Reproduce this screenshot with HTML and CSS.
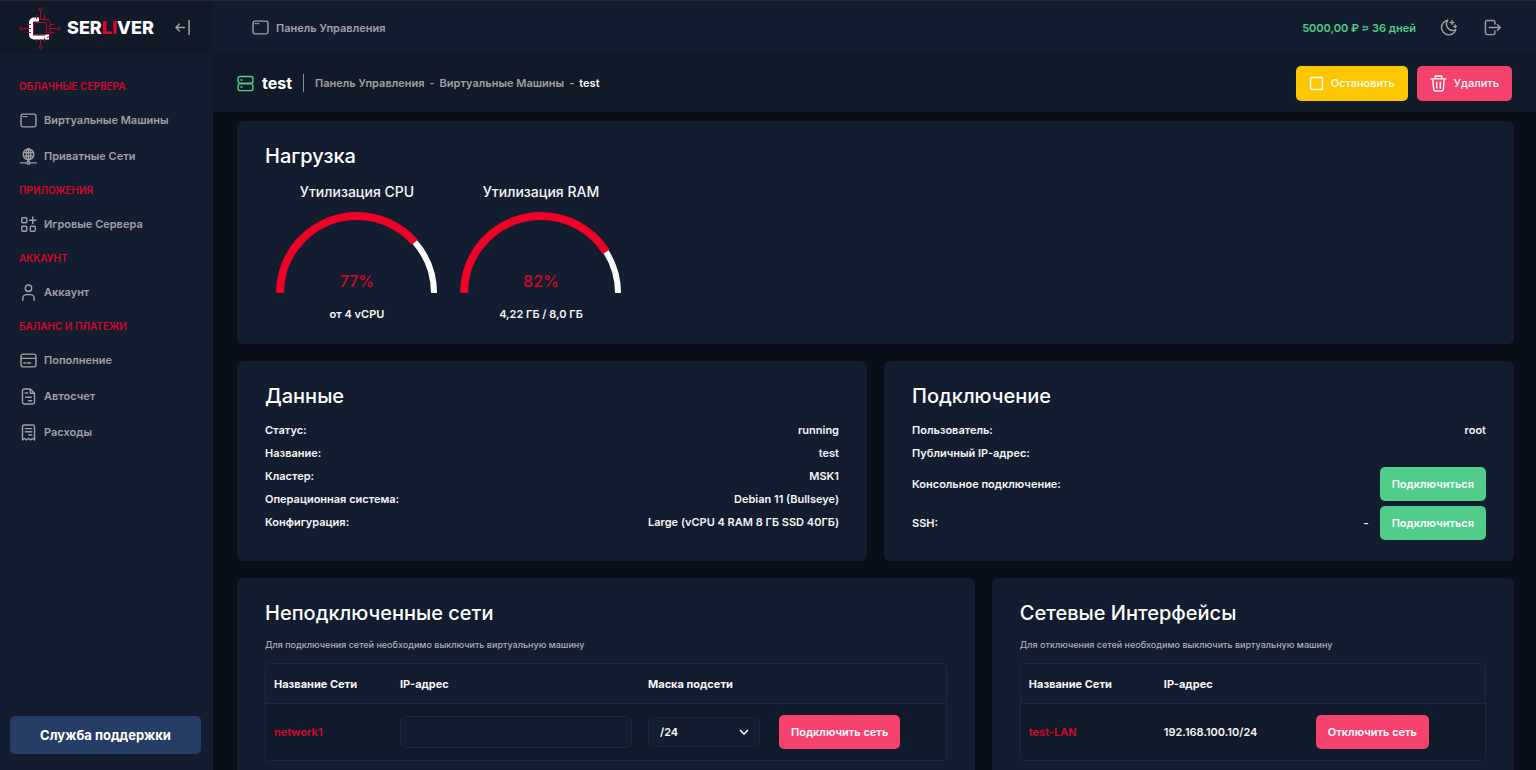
FILE: index.html
```html
<!DOCTYPE html>
<html lang="ru">
<head>
<meta charset="utf-8">
<meta name="viewport" content="width=device-width, initial-scale=1">
<title>Serliver</title>
<link rel="stylesheet" href="styles.css">
</head>
<body>
<svg class="sprite" aria-hidden="true">
  <symbol id="i-window" viewBox="0 0 24 24"><rect x="1.5" y="3" width="21" height="18" rx="2.5"/><path d="M4.5 6.5h1.6M8 6.5h1.6"/></symbol>
  <symbol id="i-globe" viewBox="0 0 24 24"><circle cx="12" cy="9" r="7.5"/><ellipse cx="12" cy="9" rx="3.3" ry="7.5"/><path d="M5 6.5h14M5 11.5h14M12 1.5v17M1 21h8.500M14.500 21H23"/><circle cx="12" cy="21" r="2"/></symbol>
  <symbol id="i-apps" viewBox="0 0 24 24"><rect x="2.500" y="2.500" width="7" height="7" rx="1.500"/><rect x="2.500" y="14.500" width="7" height="7" rx="1.500"/><rect x="14.500" y="14.500" width="7" height="7" rx="1.500"/><path d="M18 1.500v9M13.500 6h9"/></symbol>
  <symbol id="i-user" viewBox="0 0 24 24"><circle cx="12" cy="6" r="4.500"/><path d="M4 23v-3a5 5 0 0 1 5-5h6a5 5 0 0 1 5 5v3"/></symbol>
  <symbol id="i-card" viewBox="0 0 24 24"><rect x="1.500" y="3" width="21" height="18" rx="3"/><path d="M1.500 9h21M5.500 15.500h2M10 15.500h5"/></symbol>
  <symbol id="i-file" viewBox="0 0 24 24"><path d="M14.500 1.500H6A2.500 2.500 0 0 0 3.500 4v16A2.500 2.500 0 0 0 6 22.500h12a2.500 2.500 0 0 0 2.500-2.500V7.500zM14.500 1.500v6h6M7.500 7h3M8 13h8M12 18h4.500"/></symbol>
  <symbol id="i-receipt" viewBox="0 0 24 24"><path d="M3.500 22.500V4A2.500 2.500 0 0 1 6 1.500h12A2.500 2.500 0 0 1 20.500 4v18.500L17.700 20.500l-2.800 2-2.900-2-2.900 2-2.800-2zM7.500 6.500h9M7.500 11h9M12.500 15.500h4"/></symbol>
  <symbol id="i-server" viewBox="0 0 24 24"><rect x="1.500" y="2" width="21" height="9.500" rx="3"/><rect x="1.500" y="12.500" width="21" height="9.500" rx="3"/><path d="M5.500 7h1.600M5.500 17h1.600"/></symbol>
  <symbol id="i-back" viewBox="0 0 24 24"><path d="M15 12H2M7 6.500L1.500 12 7 17.500M22.500 1v22"/></symbol>
  <symbol id="i-moon" viewBox="0 0 24 24"><path d="M11 1.700A10.400 10.400 0 1 0 22.500 15 9 9 0 0 1 11 1.700z"/><path d="M17 2.500v5M14.500 5h5M21.500 8.500v4M19.500 10.500h4" /></symbol>
  <symbol id="i-exit" viewBox="0 0 24 24"><path d="M15.500 7V4.500A2.500 2.500 0 0 0 13 2H4.500A2.500 2.500 0 0 0 2 4.500v15A2.500 2.500 0 0 0 4.500 22H13a2.500 2.500 0 0 0 2.500-2.500V17M7.500 12H23M19 8l4 4-4 4"/></symbol>
  <symbol id="i-square" viewBox="0 0 24 24"><rect x="2.500" y="2.500" width="19" height="19" rx="2"/></symbol>
  <symbol id="i-trash" viewBox="0 0 24 24"><path d="M1.500 5.500h21M7.500 5V1.500h9V5M4 6l1.200 14.500a2 2 0 0 0 2 2h9.600a2 2 0 0 0 2-2L20 6M9.500 10v8.500M14.500 10v8.500"/></symbol>
</svg>

<div class="app">
  <aside class="sidebar">
    <div class="brand">
      <a class="brand-link" href="#">
        <svg class="brand-mark" viewBox="0 0 42 42" aria-hidden="true">
          <path class="chip" d="M20 12.500h-5a3 3 0 0 0-3 3v12a3 3 0 0 0 3 3h13v-3"/>
          <g class="traces">
            <circle cx="21.500" cy="2.500" r="1.500"/><circle cx="21.500" cy="40" r="1.500"/><circle cx="2" cy="21.500" r="1.500"/><circle cx="40" cy="21.500" r="1.500"/>
            <path d="M21.500 4v8M21.500 32.500v6M3.500 21.500H12M31 21.500h7.500M17.500 8v4M25.500 8v4M17.500 32.500v3M25.500 31v4M8 17.500h4M8 25.500h4M31 17.500h4M31 25.500h4"/>
            <path d="M20 12.500h8a3 3 0 0 1 3 3v12a3 3 0 0 1-3 3"/><rect x="14.500" y="15.500" width="13" height="12" rx="1"/>
          </g>
        </svg>
        <span class="brand-name">SER<span class="accent">LI</span>VER</span>
      </a>
      <button class="icon-button" type="button" aria-label="Свернуть меню"><svg class="icon icon-small"><use href="#i-back"/></svg></button>
    </div>
    <nav class="nav">
      <h2 class="nav-title">ОБЛАЧНЫЕ СЕРВЕРА</h2>
      <a class="nav-item" href="#"><svg class="icon"><use href="#i-window"/></svg>Виртуальные Машины</a>
      <a class="nav-item" href="#"><svg class="icon"><use href="#i-globe"/></svg>Приватные Сети</a>
      <h2 class="nav-title">ПРИЛОЖЕНИЯ</h2>
      <a class="nav-item" href="#"><svg class="icon"><use href="#i-apps"/></svg>Игровые Сервера</a>
      <h2 class="nav-title">АККАУНТ</h2>
      <a class="nav-item" href="#"><svg class="icon"><use href="#i-user"/></svg>Аккаунт</a>
      <h2 class="nav-title">БАЛАНС И ПЛАТЕЖИ</h2>
      <a class="nav-item" href="#"><svg class="icon"><use href="#i-card"/></svg>Пополнение</a>
      <a class="nav-item" href="#"><svg class="icon"><use href="#i-file"/></svg>Автосчет</a>
      <a class="nav-item" href="#"><svg class="icon"><use href="#i-receipt"/></svg>Расходы</a>
    </nav>
    <a class="support" href="#">Служба поддержки</a>
  </aside>

  <div class="page">
    <header class="topbar">
      <a class="topbar-link" href="#"><svg class="icon"><use href="#i-window"/></svg>Панель Управления</a>
      <div class="topbar-tools">
        <span class="balance">5000,00 ₽ ≈ 36 дней</span>
        <button class="icon-button" type="button" aria-label="Сменить тему"><svg class="icon"><use href="#i-moon"/></svg></button>
        <button class="icon-button" type="button" aria-label="Выйти"><svg class="icon"><use href="#i-exit"/></svg></button>
      </div>
    </header>
    <div class="titlebar">
      <svg class="icon icon-green"><use href="#i-server"/></svg>
      <h1 class="title">test</h1>
      <nav class="crumbs"><a href="#">Панель Управления</a><span>-</span><a href="#">Виртуальные Машины</a><span>-</span><span class="current">test</span></nav>
      <div class="actions">
        <button class="button button-large yellow" type="button"><svg class="icon icon-small"><use href="#i-square"/></svg>Остановить</button>
        <button class="button button-large pink" type="button"><svg class="icon"><use href="#i-trash"/></svg>Удалить</button>
      </div>
    </div>

    <main class="content">
      <section class="card span-12">
        <h2 class="card-title">Нагрузка</h2>
        <div class="gauges">
          <figure class="gauge">
            <figcaption class="gauge-title">Утилизация CPU</figcaption>
            <svg class="gauge-svg" viewBox="0 0 162 82">
              <path class="gauge-rest" pathLength="100" stroke-dasharray="0 77 23" d="M4 82a77 77 0 0 1 154 0"/>
              <path class="gauge-used" pathLength="100" stroke-dasharray="77 100" d="M4 82a77 77 0 0 1 154 0"/>
              <text class="gauge-value" x="81" y="76">77%</text>
            </svg>
            <p class="gauge-note">от 4 vCPU</p>
          </figure>
          <figure class="gauge">
            <figcaption class="gauge-title">Утилизация RAM</figcaption>
            <svg class="gauge-svg" viewBox="0 0 162 82">
              <path class="gauge-rest" pathLength="100" stroke-dasharray="0 82 18" d="M4 82a77 77 0 0 1 154 0"/>
              <path class="gauge-used" pathLength="100" stroke-dasharray="82 100" d="M4 82a77 77 0 0 1 154 0"/>
              <text class="gauge-value" x="81" y="76">82%</text>
            </svg>
            <p class="gauge-note">4,22 ГБ / 8,0 ГБ</p>
          </figure>
        </div>
      </section>

      <section class="card span-6">
        <h2 class="card-title">Данные</h2>
        <dl class="facts">
          <div class="fact"><dt>Статус:</dt><dd>running</dd></div>
          <div class="fact"><dt>Название:</dt><dd>test</dd></div>
          <div class="fact"><dt>Кластер:</dt><dd>MSK1</dd></div>
          <div class="fact"><dt>Операционная система:</dt><dd>Debian 11 (Bullseye)</dd></div>
          <div class="fact"><dt>Конфигурация:</dt><dd>Large (vCPU 4 RAM 8 ГБ SSD 40ГБ)</dd></div>
        </dl>
      </section>

      <section class="card span-6">
        <h2 class="card-title">Подключение</h2>
        <dl class="facts">
          <div class="fact"><dt>Пользователь:</dt><dd>root</dd></div>
          <div class="fact"><dt>Публичный IP-адрес:</dt><dd></dd></div>
          <div class="fact"><dt>Консольное подключение:</dt><dd><button class="button green" type="button">Подключиться</button></dd></div>
          <div class="fact"><dt>SSH:</dt><dd>-<button class="button green" type="button">Подключиться</button></dd></div>
        </dl>
      </section>

      <section class="card span-7">
        <h2 class="card-title">Неподключенные сети</h2>
        <p class="hint">Для подключения сетей необходимо выключить виртуальную машину</p>
        <table class="table">
          <colgroup><col class="c-name"><col class="c-address"><col class="c-mask"><col></colgroup>
          <thead><tr><th>Название Сети</th><th>IP-адрес</th><th>Маска подсети</th><th></th></tr></thead>
          <tbody><tr>
            <td><a class="net" href="#">network1</a></td>
            <td><input class="field" type="text" aria-label="IP-адрес"></td>
            <td><span class="select"><select class="field field-select" aria-label="Маска подсети"><option>/24</option></select><svg class="chevron" viewBox="0 0 10 6" aria-hidden="true"><path d="M1 1l4 4 4-4"/></svg></span></td>
            <td><button class="button pink" type="button">Подключить сеть</button></td>
          </tr></tbody>
        </table>
      </section>

      <section class="card span-5">
        <h2 class="card-title">Сетевые Интерфейсы</h2>
        <p class="hint">Для отключения сетей необходимо выключить виртуальную машину</p>
        <table class="table">
          <colgroup><col class="c-iface"><col class="c-ip"><col></colgroup>
          <thead><tr><th>Название Сети</th><th>IP-адрес</th><th></th></tr></thead>
          <tbody><tr>
            <td><a class="net" href="#">test-LAN</a></td>
            <td>192.168.100.10/24</td>
            <td><button class="button pink" type="button">Отключить сеть</button></td>
          </tr></tbody>
        </table>
      </section>
    </main>
  </div>
</div>
</body>
</html>
```
FILE: styles.css
```css
:root {
  --bg: #080f18;
  --panel: #131d30;
  --deep: #111a29;
  --line: #1a2842;
  --muted: #a0a0a0;
  --red: #d8052c;
  --green: #50cd89;
  --pink: #f5426c;
}

* { box-sizing: border-box; }

body {
  margin: 0;
  background: var(--bg);
  color: #f5f5f5;
  font: 600 11px/18px Inter, sans-serif;
}

h1, h2, p, dl, dd, figure { margin: 0; }
a { color: inherit; text-decoration: none; }
.sprite { display: none; }

.app {
  display: flex;
  height: 100vh;
  overflow: hidden;
  border-top: 1px solid #29292d;
}

.icon {
  width: 17px;
  height: 17px;
  flex: none;
  fill: none;
  stroke: currentColor;
  stroke-width: 2;
  stroke-linecap: round;
  stroke-linejoin: round;
}
.icon-small { width: 15px; height: 15px; stroke-width: 2.4; }
.icon-green { color: var(--green); }

.icon-button {
  display: flex;
  padding: 0;
  border: 0;
  background: none;
  color: var(--muted);
}

/* Sidebar */
.sidebar {
  display: flex;
  flex-direction: column;
  flex: none;
  width: 213px;
  background: var(--panel);
}
.brand {
  display: flex;
  align-items: center;
  justify-content: space-between;
  height: 53px;
  flex: none;
  padding: 0 23px 0 19px;
  background: var(--deep);
}
.brand-link { display: flex; align-items: center; gap: 6px; }
.brand-mark { width: 42px; height: 42px; fill: none; }
.traces { stroke: #b8062e; stroke-width: 1; }
.chip { stroke: #fff; stroke-width: 4; }
.brand-name { color: #fff; font-size: 18px; font-weight: 800; }
.accent { color: #e4032e; }

.nav { display: flex; flex-direction: column; padding-top: 16px; flex: 1; }
.nav-title {
  padding: 0 19px;
  color: var(--red);
  font-size: 10px;
  font-weight: 600;
  line-height: 32px;
}
.nav-item {
  display: flex;
  align-items: center;
  gap: 7px;
  height: 36px;
  padding: 0 20px;
  color: var(--muted);
}
.support {
  margin: 0 12px 16px 10px;
  border-radius: 5px;
  background: #263d66;
  color: #fff;
  font-size: 13px;
  font-weight: 700;
  line-height: 38px;
  text-align: center;
}

/* Header bars */
.page { display: flex; flex-direction: column; flex: 1; min-width: 0; }
.topbar {
  display: flex;
  align-items: center;
  justify-content: space-between;
  flex: none;
  height: 53px;
  padding: 0 35px 0 39px;
  background: var(--panel);
  color: var(--muted);
}
.topbar-link { display: flex; align-items: center; gap: 7px; }
.topbar-tools { display: flex; align-items: center; gap: 27px; }
.balance { margin-right: -3px; color: var(--green); }
.titlebar {
  display: flex;
  align-items: center;
  flex: none;
  height: 58px;
  padding: 0 24px;
  background: var(--deep);
}
.title { margin-left: 8px; color: #fff; font-size: 16px; font-weight: 700; }
.crumbs {
  display: flex;
  gap: 5px;
  margin-left: 11px;
  padding-left: 11px;
  color: var(--muted);
  border-left: 1px solid #8a8d93;
}
.current { color: #fff; }
.actions { display: flex; gap: 9px; margin-left: auto; }

/* Buttons */
.button {
  display: inline-flex;
  align-items: center;
  justify-content: center;
  gap: 7px;
  height: 34px;
  padding: 0 12px;
  border: 0;
  border-radius: 5px;
  color: #fff;
  font: inherit;
  white-space: nowrap;
}
.button-large { height: 35px; padding: 0 13px; font-weight: 500; }
.yellow { background: #ffc700; }
.pink { background: var(--pink); }
.green { background: var(--green); }

/* Cards */
.content {
  display: grid;
  grid-template-columns: repeat(12, minmax(0, 1fr));
  gap: 17px;
  padding: 9px 22px 24px 24px;
  overflow: hidden;
}
.card { padding: 22px 28px 21px; border-radius: 6px; background: var(--panel); }
.span-12 { grid-column: span 12; }
.span-7 { grid-column: span 7; }
.span-6 { grid-column: span 6; }
.span-5 { grid-column: span 5; }
.card-title { color: #fff; font-size: 20px; font-weight: 500; line-height: 26px; }

.gauges { display: flex; margin-top: 13px; }
.gauge { display: flex; flex-direction: column; align-items: center; width: 184px; }
.gauge-title { font-size: 14px; font-weight: 500; line-height: 20px; }
.gauge-svg { width: 162px; height: 82px; margin-top: 9px; }
.gauge-svg path { fill: none; }
.gauge-rest { stroke: #fff; stroke-width: 6; }
.gauge-used { stroke: #ee0226; stroke-width: 8; }
.gauge-value { fill: var(--red); font-size: 16px; font-weight: 500; text-anchor: middle; }
.gauge-note { margin-top: 12px; }

.facts { display: flex; flex-direction: column; gap: 5px; margin-top: 12px; }
.fact { display: flex; align-items: center; justify-content: space-between; }
.fact dd { display: flex; align-items: center; gap: 11px; }

.hint { margin: 10px 0 9px; color: #b0b0b0; font-size: 9px; font-weight: 500; }
.table {
  width: 100%;
  table-layout: fixed;
  border: 1px solid var(--line);
  border-radius: 5px;
  border-spacing: 0;
  overflow: hidden;
}
.table th, .table td { padding: 0 8px; text-align: left; }
.table th { height: 40px; font-weight: 700; border-bottom: 1px solid var(--line); }
.table td { height: 56px; background: #111a2a; }
.c-name { width: 126px; }
.c-address { width: 248px; }
.c-mask { width: 131px; }
.c-iface { width: 135px; }
.c-ip { width: 152px; }
.net { color: var(--red); }

.field {
  width: 100%;
  height: 32px;
  padding: 0 11px;
  border: 1px solid var(--line);
  border-radius: 5px;
  background: var(--panel);
  color: #fff;
  font: inherit;
}
.field-select { height: 30px; appearance: none; }
.select { display: grid; align-items: center; margin-right: 3px; }
.select > * { grid-area: 1 / 1; }
.chevron {
  justify-self: end;
  width: 10px;
  height: 6px;
  margin-right: 11px;
  fill: none;
  stroke: #fff;
  stroke-width: 1.5;
  pointer-events: none;
}
```
